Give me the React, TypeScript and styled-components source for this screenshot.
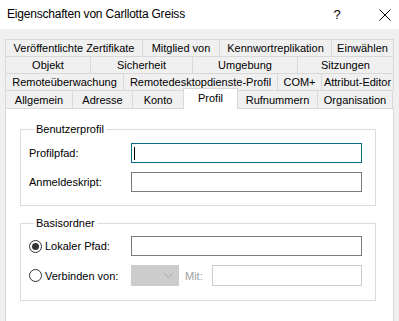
import React from "react"
import styled, { createGlobalStyle } from "styled-components"

const GlobalStyle = createGlobalStyle`
  html, body {
    margin: 0;
    padding: 0;
    background: #f0f0f0;
  }
  * {
    box-sizing: border-box;
  }
`

const Window = styled.div`
  width: 399px;
  height: 321px;
  overflow: hidden;
  display: flex;
  flex-direction: column;
  background: #f0f0f0;
  font-family: "Liberation Sans", Arial, sans-serif;
  font-size: 11px;
  color: #000;
`

const TitleBar = styled.div`
  height: 29px;
  flex: none;
  background: #fff;
  display: flex;
  align-items: center;
  gap: 11px;
  padding-left: 7px;
`

const Title = styled.div`
  flex: 1;
  font-size: 12px;
  letter-spacing: -0.2px;
  padding-bottom: 2px;
`

const TitleButton = styled.div<{ $w: number }>`
  width: ${p => p.$w}px;
  height: 29px;
  display: flex;
  align-items: center;
  justify-content: center;
  font-size: 13px;
`

const Body = styled.div`
  flex: 1;
  display: flex;
  flex-direction: column;
  padding: 10px 5px 0 5px;
`

const TabStrip = styled.div`
  display: flex;
  flex-direction: column;
`

const TabRow = styled.div`
  display: flex;
  height: 17px;
  &:last-child {
    height: 18px;
    align-items: flex-end;
  }
`

const Tab = styled.div<{ $w: number; $active?: boolean }>`
  width: ${p => p.$w}px;
  height: ${p => (p.$active ? "21px" : "100%")};
  margin-bottom: ${p => (p.$active ? "-1px" : "0")};
  z-index: ${p => (p.$active ? 2 : 0)};
  display: flex;
  align-items: center;
  justify-content: center;
  padding-bottom: ${p => (p.$active ? "3px" : "0")};
  background: ${p => (p.$active ? "#fff" : "#f0f0f0")};
  border-top: 1px solid #d9d9d9;
  border-left: 1px solid #d9d9d9;
  white-space: nowrap;
  &:last-child {
    border-right: 1px solid #d9d9d9;
  }
  ${p => p.$active && "border-right: 1px solid #d9d9d9; margin-right: -1px;"}
`

const Panel = styled.div`
  flex: 1;
  background: #fff;
  border: 1px solid #d9d9d9;
  border-bottom: none;
  padding: 13px 17px 0 14px;
  display: flex;
  flex-direction: column;
  gap: 10px;
`

const Group = styled.fieldset<{ $top: number; $bottom: number }>`
  margin: 0;
  border: 1px solid #dcdcdc;
  padding: ${p => p.$top}px 13px ${p => p.$bottom}px 8px;
  display: flex;
  flex-direction: column;
  gap: 9px;
`

const Legend = styled.legend`
  padding: 0 2px;
  margin-left: 5px;
  line-height: 14px;
  font-size: 11px;
`

const Row = styled.div`
  display: flex;
  align-items: center;
`

const Label = styled.div`
  width: 102px;
  flex: none;
  display: flex;
  align-items: center;
  gap: 3px;
`

const TextBox = styled.div<{ $focused?: boolean; $disabled?: boolean; $h?: number }>`
  flex: 1;
  height: ${p => p.$h ?? 20}px;
  background: #fff;
  border: 1px solid ${p => (p.$focused ? "#0e6c88" : p.$disabled ? "#cccccc" : "#7a7a7a")};
  display: flex;
  align-items: center;
  padding-left: 2px;
`

const Caret = styled.div`
  width: 1px;
  height: 13px;
  background: #000;
`

const Radio = styled.div<{ $checked?: boolean }>`
  width: 13px;
  height: 13px;
  border-radius: 50%;
  border: 1px solid #333;
  display: flex;
  align-items: center;
  justify-content: center;
  &::after {
    content: "";
    width: 7px;
    height: 7px;
    border-radius: 50%;
    background: ${p => (p.$checked ? "#333" : "transparent")};
  }
`

const Combo = styled.div`
  width: 48px;
  height: 21px;
  flex: none;
  background: #cccccc;
  border: 1px solid #cccccc;
  display: flex;
  align-items: center;
  justify-content: flex-end;
  padding-right: 5px;
`

const MitLabel = styled.div`
  width: 33px;
  flex: none;
  color: #a0a0a0;
  padding-left: 6px;
`

const tabRows: { label: string; w: number; active?: boolean }[][] = [
  [
    { label: "Veröffentlichte Zertifikate", w: 137 },
    { label: "Mitglied von", w: 77 },
    { label: "Kennwortreplikation", w: 112 },
    { label: "Einwählen", w: 63 },
  ],
  [
    { label: "Objekt", w: 85 },
    { label: "Sicherheit", w: 102 },
    { label: "Umgebung", w: 105 },
    { label: "Sitzungen", w: 97 },
  ],
  [
    { label: "Remoteüberwachung", w: 118 },
    { label: "Remotedesktopdienste-Profil", w: 154 },
    { label: "COM+", w: 44 },
    { label: "Attribut-Editor", w: 73 },
  ],
  [
    { label: "Allgemein", w: 67 },
    { label: "Adresse", w: 60 },
    { label: "Konto", w: 51 },
    { label: "Profil", w: 55, active: true },
    { label: "Rufnummern", w: 80 },
    { label: "Organisation", w: 76 },
  ],
]

export default function App() {
  return (
    <>
      <GlobalStyle />
      <Window>
        <TitleBar>
          <Title>Eigenschaften von Carllotta Greiss</Title>
          <TitleButton $w={46}>?</TitleButton>
          <TitleButton $w={28}>
            <svg width="12" height="12" viewBox="0 0 12 12">
              <path d="M0.5 0.5 L11.5 11.5 M11.5 0.5 L0.5 11.5" stroke="#000" strokeWidth="1" />
            </svg>
          </TitleButton>
        </TitleBar>
        <Body>
          <TabStrip>
            {tabRows.map((row, i) => (
              <TabRow key={i}>
                {row.map(tab => (
                  <Tab key={tab.label} $w={tab.w} $active={tab.active}>
                    {tab.label}
                  </Tab>
                ))}
              </TabRow>
            ))}
          </TabStrip>
          <Panel>
            <Group $top={7} $bottom={13}>
              <Legend>Benutzerprofil</Legend>
              <Row>
                <Label>Profilpfad:</Label>
                <TextBox $focused>
                  <Caret />
                </TextBox>
              </Row>
              <Row>
                <Label>Anmeldeskript:</Label>
                <TextBox />
              </Row>
            </Group>
            <Group $top={6} $bottom={14}>
              <Legend>Basisordner</Legend>
              <Row>
                <Label>
                  <Radio $checked />
                  Lokaler Pfad:
                </Label>
                <TextBox />
              </Row>
              <Row>
                <Label>
                  <Radio />
                  Verbinden von:
                </Label>
                <Combo>
                  <svg width="9" height="6" viewBox="0 0 9 6">
                    <path d="M0.5 0.5 L4.5 4.5 L8.5 0.5" fill="none" stroke="#a8a8a8" strokeWidth="1" />
                  </svg>
                </Combo>
                <MitLabel>Mit:</MitLabel>
                <TextBox $disabled $h={21} />
              </Row>
            </Group>
          </Panel>
        </Body>
      </Window>
    </>
  )
}
